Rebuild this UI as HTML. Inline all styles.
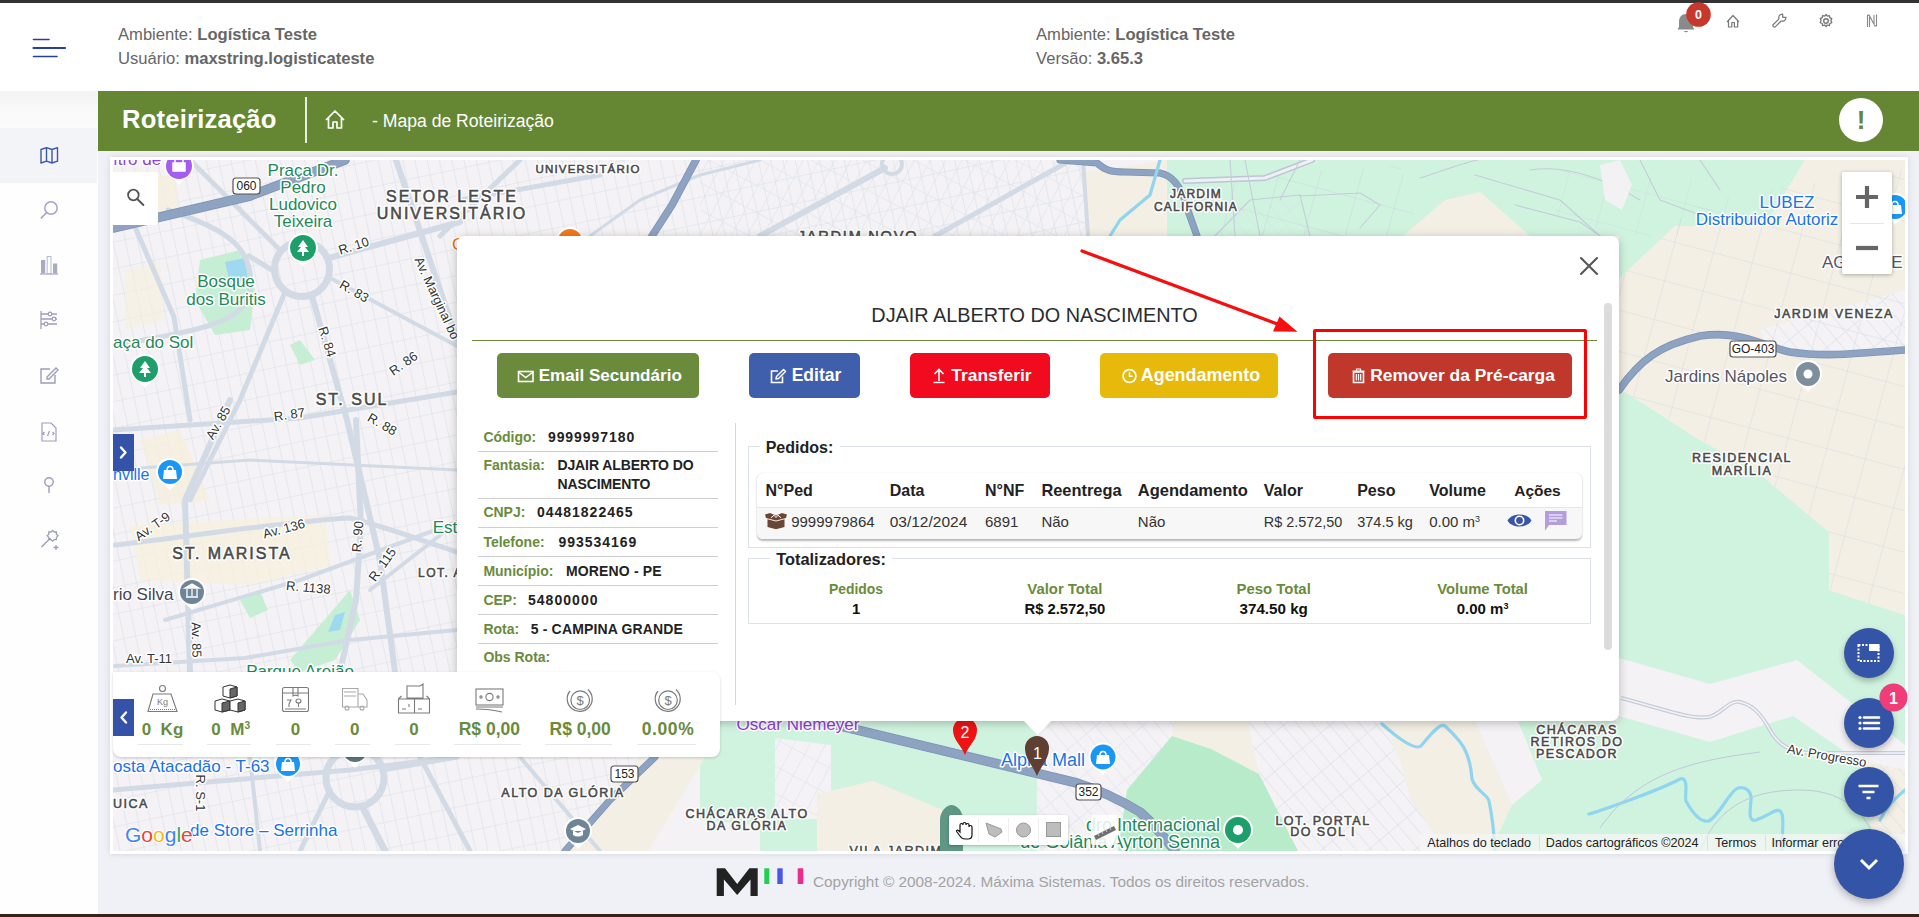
<!DOCTYPE html>
<html><head><meta charset="utf-8">
<style>
*{box-sizing:border-box;margin:0;padding:0}
html,body{width:1919px;height:917px;overflow:hidden;background:#f0f1f6;font-family:"Liberation Sans",sans-serif;position:relative}
.abs{position:absolute}
.t{position:absolute;line-height:1;white-space:nowrap}
sup{font-size:.6em;vertical-align:0;position:relative;top:-.55em}
#topbar{left:0;top:0;width:1919px;height:3px;background:#333}
#header{left:0;top:3px;width:1919px;height:88px;background:#fff}
.htxt{position:absolute;font-size:16.6px;color:#666;line-height:24px;white-space:nowrap}
.htxt b{color:#666}
#sidebar{left:0;top:91px;width:98px;height:823px;background:#fefefe}
#green{left:98px;top:91px;width:1821px;height:60px;background:#658734}
#mapcard{left:110px;top:157px;width:1798px;height:697px;background:#fff;box-shadow:0 0 6px rgba(0,0,0,.12)}
#map{left:113px;top:160px;width:1792px;height:691px;overflow:hidden;background:#f2f1f4}
#footer{left:98px;top:854px;width:1821px;height:60px}
#botbar{left:0;top:914px;width:1919px;height:3px;background:#3b2015}
#modal{left:457px;top:236px;width:1162px;height:485px;background:#fff;border-radius:8px;box-shadow:0 2px 10px rgba(0,0,0,.25)}
.btn{position:absolute;top:353px;height:45px;border-radius:5px;color:#fff;font-weight:700;font-size:17.2px;line-height:45px;white-space:nowrap}
</style></head>
<body>
<div id="topbar" class="abs"></div>
<div id="header" class="abs">
  <div class="htxt" style="left:118px;top:20px">Ambiente: <b>Logística Teste</b></div>
  <div class="htxt" style="left:118px;top:44px">Usuário: <b>maxstring.logisticateste</b></div>
  <div class="htxt" style="left:1036px;top:20px">Ambiente: <b>Logística Teste</b></div>
  <div class="htxt" style="left:1036px;top:44px">Versão: <b>3.65.3</b></div>
  <svg class="abs" style="left:30px;top:32px" width="40" height="26" viewBox="0 0 40 26">
    <line x1="3.5" y1="4.5" x2="19" y2="4.5" stroke="#2440a0" stroke-width="1.6" stroke-linecap="round"/>
    <line x1="3.5" y1="13" x2="35" y2="13" stroke="#2440a0" stroke-width="2.2" stroke-linecap="round"/>
    <line x1="3.5" y1="21.5" x2="27" y2="21.5" stroke="#2440a0" stroke-width="1.6" stroke-linecap="round"/>
  </svg>
  <svg class="abs" style="left:1670px;top:-3px" width="220" height="40" viewBox="1670 0 220 40">
    <path d="M1686 14 c-4.5 0 -7 3.5 -7 8 v5 l-1.5 2.5 h17 l-1.5 -2.5 v-5 c0 -4.5 -2.5 -8 -7 -8z" fill="#8a8a8a"/>
    <path d="M1684 31 h4 a2 1.3 0 0 1 -4 0z" fill="#8a8a8a"/>
    <circle cx="1698.5" cy="14.5" r="12.3" fill="#c8372b"/>
    <text x="1698.5" y="19" text-anchor="middle" font-family="Liberation Sans" font-weight="700" font-size="12.5" fill="#fff">0</text>
    <path d="M1727 22 l6 -6.5 l6 6.5 M1728.5 20.5 v6.5 h3.3 v-4.5 h2.6 v4.5 h3.3 v-6.5" fill="none" stroke="#777" stroke-width="1.2" stroke-linejoin="round"/>
    <g transform="translate(1779.3 20.7) rotate(-45) translate(-8.5 0)" fill="none" stroke="#777" stroke-width="1.2" stroke-linejoin="round">
      <path d="M9.6 -1.5 H1.6 A1.5 1.5 0 0 0 1.6 1.5 H9.6 A3.6 3.6 0 0 0 15.6 2.3 L13.3 0 L15.6 -2.3 A3.6 3.6 0 0 0 9.6 -1.5z"/>
    </g>
    <circle cx="1826" cy="21" r="2.3" fill="none" stroke="#777" stroke-width="1.4"/>
    <path d="M1826 14.5 l1.3 1.7 l2.1 -0.6 l0.4 2.1 l2 0.9 l-0.9 2 l0.9 2 l-2 0.9 l-0.4 2.1 l-2.1 -0.6 l-1.3 1.7 l-1.3 -1.7 l-2.1 0.6 l-0.4 -2.1 l-2 -0.9 l0.9 -2 l-0.9 -2 l2 -0.9 l0.4 -2.1 l2.1 0.6z" fill="none" stroke="#777" stroke-width="1.3" stroke-linejoin="round"/>
    <path d="M1867.5 27 v-11.5 l1.5 -0.5 l6 11 l1.5 -0.5 v-11 M1869.5 27 v-10 M1874 15 v10" fill="none" stroke="#888" stroke-width="1.1"/>
  </svg>
</div>
<div id="sidebar" class="abs">
  <div class="abs" style="left:0;top:0;width:98px;height:37px;background:linear-gradient(#f3f3f5,#f9f9fa 50%,#fbfbfc)"></div>
  <div class="abs" style="left:0;top:37px;width:97px;height:55px;background:#f3f4f8"></div>
  <svg class="abs" style="left:0;top:0" width="98" height="480" viewBox="0 91 98 480">
    <g fill="none" stroke="#3b57a8" stroke-width="1.4" stroke-linejoin="round">
      <path d="M41 149.5 l5.5 -1.8 l5.5 1.8 l5.5 -1.8 v13.5 l-5.5 1.8 l-5.5 -1.8 l-5.5 1.8z M46.5 147.7 v13.5 M52 149.5 v13.5"/>
    </g>
    <g fill="none" stroke="#9d9cbc" stroke-width="1.5">
      <circle cx="51" cy="208" r="6.2" stroke="#a3a6c8"/><path d="M46.6 212.6 L40.8 218.4" stroke="#a3a6c8"/>
      <path d="M40 274 h18" stroke="#a9aac3" stroke-width="1.3"/>
      <rect x="41" y="260" width="4.2" height="13.5" fill="#a9aac3" stroke="none"/>
      <rect x="47.2" y="256.5" width="3.8" height="17" fill="none" stroke="#b5b8d4" stroke-width="1"/>
      <rect x="53" y="263.5" width="4.2" height="10" fill="#a9aac3" stroke="none"/>
      <path d="M41 311 v18 M41 314 h16 M41 319 h16 M41 324 h16" stroke-width="1.3"/>
      <circle cx="50" cy="314" r="1.8" fill="#fafafc" stroke-width="1.2"/><circle cx="54" cy="319" r="1.8" fill="#fafafc" stroke-width="1.2"/><circle cx="46" cy="324" r="1.8" fill="#fafafc" stroke-width="1.2"/>
      <path d="M50 369 h-9 v14 h14 v-8 M47 377 l9 -9 l2 2 l-9 9 h-2z" stroke-width="1.4"/>
      <path d="M42 423 h9 l5 5 v13 h-14z M44.5 432 l-1.5 1.5 l1.5 1.5 M52.5 432 l1.5 1.5 l-1.5 1.5 M49.5 431 l-2 5" stroke-width="1.2"/>
      <circle cx="49" cy="482" r="4.2" stroke-width="1.4"/><path d="M49 486 v7" stroke-width="1.4"/>
      <path d="M41.5 547 l9 -9 M51 532 l1.6 -1.6 l1.6 1.6 h2.2 v2.2 l1.6 1.6 l-1.6 1.6 v2.2 h-2.2 l-1.6 1.6 l-1.6 -1.6 h-2.2 v-2.2 l-1.6 -1.6 l1.6 -1.6 v-2.2z M56 545 v5 M53.5 547.5 h5" stroke-width="1.3"/>
    </g>
  </svg>
</div>
<div id="green" class="abs">
  <div class="abs" style="left:24px;top:13px;font-size:25.6px;letter-spacing:0.2px;font-weight:700;color:#fff;white-space:nowrap;line-height:30px">Roteirização</div>
  <div class="abs" style="left:207px;top:6px;width:1.5px;height:46px;background:#e8eee0"></div>
  <svg class="abs" style="left:226px;top:18px" width="22" height="22" viewBox="0 0 22 22">
    <path d="M2 11 l9 -9 l9 9 M4.5 9 v10 h4.5 v-6 h4 v6 h4.5 v-10" fill="none" stroke="#fff" stroke-width="1.7" stroke-linejoin="round"/>
  </svg>
  <div class="abs" style="left:274px;top:20px;font-size:17.6px;color:#fff;white-space:nowrap;line-height:20px">- Mapa de Roteirização</div>
  <div class="abs" style="left:1741px;top:7px;width:44px;height:44px;border-radius:22px;background:#fff;color:#658734;font-weight:700;font-size:26px;text-align:center;line-height:44px">!</div>
</div>
<div id="mapcard" class="abs"></div>
<div id="map" class="abs">
<svg width="1792" height="691" viewBox="113 160 1792 691" style="position:absolute;left:0;top:0">
<defs>
  <pattern id="g1" width="12" height="26" patternUnits="userSpaceOnUse" patternTransform="rotate(-12)">
    <path d="M0 0 H12 M0 0 V26" stroke="#d8dfe8" stroke-width="1.2" fill="none"/>
  </pattern>
  <pattern id="g2" width="14" height="24" patternUnits="userSpaceOnUse" patternTransform="rotate(28)">
    <path d="M0 0 H14 M0 0 V24" stroke="#dae1ea" stroke-width="1" fill="none"/>
  </pattern>
  <pattern id="g3" width="12" height="30" patternUnits="userSpaceOnUse" patternTransform="rotate(-40)">
    <path d="M0 0 H12 M0 0 V30" stroke="#d3dbe6" stroke-width="1" fill="none"/>
  </pattern>
  <pattern id="g4" width="40" height="40" patternUnits="userSpaceOnUse" patternTransform="rotate(15)">
    <path d="M0 0 H40 M0 0 V40" stroke="#c9d3e0" stroke-width="0.9" fill="none"/>
  </pattern>
</defs>
<rect x="113" y="160" width="1792" height="691" fill="#f4f2f5"/>
<polygon points="113,160 1086,160 1086,236 457,236 457,672 113,672" fill="url(#g1)" />
<polygon points="113,757 700,757 640,851 113,851" fill="url(#g1)" />
<polygon points="700,160 1086,160 1086,236 700,236" fill="url(#g2)" />
<polygon points="1167,160 1805,160 1765,226 1675,226 1619,279 1619,160" fill="#d0f3df" />
<polygon points="1619,388 1700,440 1755,470 1829,532 1829,590 1905,615 1905,851 1619,851" fill="#d0f3df" />
<polygon points="1167,160 1619,160 1619,236 1167,236" fill="#d0f3df" />
<polygon points="1805,160 1905,160 1905,615 1829,590 1829,532 1755,470 1700,440 1619,388 1619,279 1675,226 1765,226" fill="#f3efe4" />
<polygon points="1760,330 1905,290 1905,350 1770,352" fill="#f4f2f5" />
<polygon points="1760,330 1905,290 1905,350 1770,352" fill="url(#g3)" />
<polygon points="1700,200 1905,170 1905,615 1829,590 1829,532 1755,470 1700,440 1619,388 1619,279" fill="url(#g4)" opacity=".8"/>
<polygon points="1086,172 1167,160 1167,236 1086,236" fill="#f3efe4" />
<polygon points="1403,236 1445,200 1480,192 1530,236" fill="#f3efe4" />
<polygon points="1200,180 1400,165 1420,236 1190,236" fill="url(#g4)" />
<polygon points="1550,170 1700,180 1720,236 1560,236" fill="url(#g4)" opacity=".7"/>
<polygon points="1619,658 1710,684 1797,660 1905,745 1905,770 1860,762 1793,716 1710,742 1619,716" fill="#f4f2f5" />
<polygon points="1860,760 1905,770 1905,851 1875,851" fill="#f3efe4" />
<polygon points="1860,760 1905,770 1905,851 1875,851" fill="url(#g3)" />
<polygon points="700,721 1037,721 1037,851 700,851" fill="#d0f3df" />
<polygon points="640,757 705,757 648,851 560,851" fill="#f3efe4" />
<polygon points="775,738 831,745 831,819 775,819" fill="#f4f2f5" />
<polygon points="775,738 831,745 831,819 775,819" fill="url(#g2)" />
<polygon points="817,794 873,781 950,813 950,851 817,851" fill="#f3efe4" />
<polygon points="700,820 760,825 760,851 700,851" fill="#f4f2f5" />
<polygon points="1037,721 1174,721 1174,800 1127,790 1118,851 1037,851" fill="#f4f2f5" />
<polygon points="1037,721 1174,721 1174,800 1127,790 1118,851 1037,851" fill="url(#g3)" opacity=".8"/>
<polygon points="1174,721 1259,721 1259,774 1211,749 1172,736" fill="#f3efe4" />
<polygon points="1172,736 1211,749 1259,774 1307,851 1118,851 1127,790" fill="#b7ebca" />
<polygon points="1248,721 1385,721 1400,760 1411,800 1447,851 1298,851 1259,774" fill="#f4f2f5" />
<polygon points="1248,721 1385,721 1400,760 1411,800 1447,851 1298,851 1259,774" fill="url(#g3)" />
<polygon points="1385,721 1475,721 1512,805 1490,851 1447,851 1411,800 1400,760" fill="#f3efe4" />
<polygon points="1475,721 1619,721 1619,851 1490,851 1512,805" fill="#d0f3df" />
<polygon points="1475,721 1518,721 1542,780 1512,805" fill="#f4f2f5" />
<polygon points="200,260 240,250 255,290 250,330 215,335 195,300" fill="#c6eed4" />
<polygon points="225,262 245,258 248,280 230,283" fill="#9fd9f0" />
<polygon points="118,180 175,175 180,215 130,230" fill="#f7f0dc" opacity=".7"/>
<polygon points="125,270 160,262 165,320 125,330" fill="#f7f0dc" opacity=".6"/>
<polygon points="130,525 325,515 330,565 250,585 140,580" fill="#f7f0dc" opacity=".75"/>
<polygon points="140,440 180,430 210,500 160,505" fill="#f7f0dc" opacity=".7"/>
<polygon points="350,590 360,620 335,660 300,672 290,660" fill="#c6eed4" />
<polygon points="335,615 345,612 340,630 328,632" fill="#9fd9f0" />
<polygon points="290,345 300,340 315,360 300,365" fill="#c6eed4" />
<polygon points="240,600 260,592 268,610 250,618" fill="#c6eed4" />
<g fill="none" stroke-linecap="round" stroke-linejoin="round">
<path d="M190 160 L280 250" stroke="#d2dbe5" stroke-width="5"/>
<path d="M329 258 L460 222" stroke="#d2dbe5" stroke-width="6"/>
<path d="M332 279 L457 346" stroke="#d2dbe5" stroke-width="4"/>
<path d="M312 296 L347 420 L380 560 L395 672" stroke="#d2dbe5" stroke-width="6"/>
<path d="M285 292 L240 400 L190 500" stroke="#d2dbe5" stroke-width="5"/>
<path d="M272 270 L249 256" stroke="#d2dbe5" stroke-width="5"/>
<path d="M168 210 C230 230 255 250 250 290 C245 320 210 330 113 345" stroke="#d2dbe5" stroke-width="5"/>
<path d="M396 160 L457 340" stroke="#d2dbe5" stroke-width="6"/>
<path d="M135 227 L174 317 L190 420" stroke="#d2dbe5" stroke-width="5"/>
<path d="M230 400 L185 500 L190 672" stroke="#d2dbe5" stroke-width="6"/>
<path d="M113 430 L300 418 L457 392" stroke="#d2dbe5" stroke-width="5"/>
<path d="M115 545 C200 535 300 520 350 518 C380 525 420 540 457 552" stroke="#d2dbe5" stroke-width="5"/>
<path d="M356 420 L361 525 L356 600 L340 672" stroke="#d2dbe5" stroke-width="6"/>
<path d="M457 522 L370 590" stroke="#d2dbe5" stroke-width="4"/>
<path d="M165 620 L300 580 L457 522" stroke="#d2dbe5" stroke-width="4"/>
<path d="M115 666 L245 658 L350 640 L457 630" stroke="#d2dbe5" stroke-width="4"/>
<path d="M113 470 L250 460 L457 470" stroke="#d2dbe5" stroke-width="3"/>
<path d="M520 160 L440 236" stroke="#d2dbe5" stroke-width="5"/>
<path d="M760 236 L885 168" stroke="#d2dbe5" stroke-width="6"/>
<path d="M935 236 L1071 160" stroke="#d2dbe5" stroke-width="5"/>
<circle cx="892" cy="164" r="10" stroke="#d2dbe5" stroke-width="4"/>
<path d="M590 236 L640 200 L700 175 L760 160" stroke="#d2dbe5" stroke-width="3"/>
<path d="M460 200 L600 175" stroke="#d2dbe5" stroke-width="5"/>
<path d="M1083 160 L1088 236" stroke="#d2dbe5" stroke-width="4"/>
<path d="M113 790 L350 770 L457 757" stroke="#d2dbe5" stroke-width="5"/>
<path d="M420 757 L470 851" stroke="#d2dbe5" stroke-width="5"/>
<path d="M250 757 L260 851" stroke="#d2dbe5" stroke-width="4"/>
<path d="M520 757 L600 851" stroke="#d2dbe5" stroke-width="4"/>
<path d="M1185 181 L1265 178 L1312 160" stroke="#bcc5d3" stroke-width="6"/>
<path d="M1185 181 L1265 178 L1312 160" stroke="#eef0f3" stroke-width="3"/>
<path d="M1215 236 L1250 200 L1300 195 L1310 236" stroke="#c5ccda" stroke-width="1.1"/>
<path d="M1300 196 L1360 193 L1380 205 L1360 228" stroke="#c5ccda" stroke-width="1.1"/>
<path d="M1420 178 C1440 172 1465 162 1478 160" stroke="#c5ccda" stroke-width="1.1"/>
<path d="M1475 175 L1560 200 L1600 236" stroke="#c5ccda" stroke-width="1.1"/>
<path d="M1515 205 L1580 222 L1600 236" stroke="#c5ccda" stroke-width="1.1"/>
<path d="M1230 160 L1235 236" stroke="#c5ccda" stroke-width="1.1"/>
<path d="M1245 160 L1260 236" stroke="#c5ccda" stroke-width="1.1"/>
<path d="M1280 200 L1300 160" stroke="#c5ccda" stroke-width="1.1"/>
<path d="M1640 160 L1660 200 L1700 215" stroke="#c5ccda" stroke-width="1.1"/>
<path d="M1700 160 L1720 190" stroke="#c5ccda" stroke-width="1.1"/>
<path d="M1530 170 C1560 165 1600 175 1640 200" stroke="#c5ccda" stroke-width="1.1"/>
<polygon points="1225,236 1230,210 1300,200 1310,236" fill="url(#g3)" opacity=".7"/>
<polygon points="1600,165 1620,160 1632,185 1622,210 1605,200" fill="#f2f1f4" />
<circle cx="302" cy="269" r="27.5" stroke="#d2dbe5" stroke-width="7"/>
<circle cx="355" cy="778" r="29" stroke="#d2dbe5" stroke-width="7"/>
<path d="M362 806 L385 851" stroke="#d2dbe5" stroke-width="7"/>
<path d="M330 790 L300 851" stroke="#d2dbe5" stroke-width="5"/>
<path d="M383 770 L457 757" stroke="#d2dbe5" stroke-width="5"/>
<path d="M113 228 L250 196 L345 160" stroke="#7d93b5" stroke-width="9.6"/>
<path d="M113 228 L250 196 L345 160" stroke="#8ea3c1" stroke-width="8"/>
<path d="M696 160 L672 205 L652 236" stroke="#7d93b5" stroke-width="7.6"/>
<path d="M696 160 L672 205 L652 236" stroke="#8ea3c1" stroke-width="6"/>
<path d="M1060 160 L1097 163 C1105 170 1110 172 1125 172 L1160 173 C1175 176 1182 190 1186 205 L1197 236" stroke="#7d93b5" stroke-width="7.1"/>
<path d="M1060 160 L1097 163 C1105 170 1110 172 1125 172 L1160 173 C1175 176 1182 190 1186 205 L1197 236" stroke="#8ea3c1" stroke-width="5.5"/>
<path d="M1619 390 C1640 360 1660 345 1700 336 C1740 330 1760 345 1790 352 C1830 358 1870 352 1905 350" stroke="#7d93b5" stroke-width="7.6"/>
<path d="M1619 390 C1640 360 1660 345 1700 336 C1740 330 1760 345 1790 352 C1830 358 1870 352 1905 350" stroke="#8ea3c1" stroke-width="6"/>
<path d="M820 721 L1077 783 C1100 790 1120 800 1140 812 C1155 825 1165 838 1175 851" stroke="#7d93b5" stroke-width="9.6"/>
<path d="M820 721 L1077 783 C1100 790 1120 800 1140 812 C1155 825 1165 838 1175 851" stroke="#8ea3c1" stroke-width="8"/>
<path d="M655 757 L610 800 L565 851" stroke="#7d93b5" stroke-width="7.1"/>
<path d="M655 757 L610 800 L565 851" stroke="#8ea3c1" stroke-width="5.5"/>
</g>
<g fill="none" stroke="#8fd5ef" stroke-width="3.2" stroke-linejoin="round" stroke-linecap="round">
<path d="M1160 160 L1150 195 L1120 220 L1110 236"/>
<path d="M1382 724 C1400 740 1415 750 1421 746 C1430 735 1440 722 1445 726 C1460 740 1470 750 1472 779 C1475 790 1488 795 1489 801 C1492 815 1494 830 1495 851"/>
<path d="M1589 814 C1600 811 1660 790 1680 779 C1690 776 1684 798 1686 801 C1692 812 1700 823 1709 821 C1720 815 1730 790 1738 788 C1746 786 1752 792 1751 800 C1750 812 1748 822 1756 820 C1770 815 1776 808 1780 811 C1785 815 1782 830 1782 851"/>
<path d="M1880 820 C1890 800 1900 795 1905 790"/>
</g>
<path d="M1621 698 C1660 708 1690 720 1709 717 C1722 714 1728 700 1740 702 C1752 705 1760 712 1770 730 C1778 745 1790 752 1810 753 L1905 753" fill="none" stroke="#c5cdd9" stroke-width="4"/>
<path d="M1621 698 C1660 708 1690 720 1709 717 C1722 714 1728 700 1740 702 C1752 705 1760 712 1770 730 C1778 745 1790 752 1810 753 L1905 753" fill="none" stroke="#f4f2f5" stroke-width="1.5"/>
<path d="M1600 828 C1640 770 1700 760 1760 752 M1700 851 C1720 800 1760 790 1800 790 C1850 790 1870 820 1880 851" fill="none" stroke="#c0c8d8" stroke-width="1"/>
<!--LABELS-->
<g font-family="Liberation Sans">
<text x="303" y="175.5" text-anchor="middle" font-size="17" font-weight="400" fill="#1e8a5a" letter-spacing="0" style="paint-order:stroke;stroke:#fff;stroke-width:3px;stroke-linejoin:round;">Praça Dr.</text>
<text x="303" y="192.5" text-anchor="middle" font-size="17" font-weight="400" fill="#1e8a5a" letter-spacing="0" style="paint-order:stroke;stroke:#fff;stroke-width:3px;stroke-linejoin:round;">Pedro</text>
<text x="303" y="209.5" text-anchor="middle" font-size="17" font-weight="400" fill="#1e8a5a" letter-spacing="0" style="paint-order:stroke;stroke:#fff;stroke-width:3px;stroke-linejoin:round;">Ludovico</text>
<text x="303" y="226.9" text-anchor="middle" font-size="17" font-weight="400" fill="#1e8a5a" letter-spacing="0" style="paint-order:stroke;stroke:#fff;stroke-width:3px;stroke-linejoin:round;">Teixeira</text>
<text x="226" y="287.4" text-anchor="middle" font-size="17" font-weight="400" fill="#1e8a5a" letter-spacing="0" style="paint-order:stroke;stroke:#fff;stroke-width:3px;stroke-linejoin:round;">Bosque</text>
<text x="226" y="304.8" text-anchor="middle" font-size="17" font-weight="400" fill="#1e8a5a" letter-spacing="0" style="paint-order:stroke;stroke:#fff;stroke-width:3px;stroke-linejoin:round;">dos Buritis</text>
<text x="113" y="348" text-anchor="start" font-size="17" font-weight="400" fill="#1e8a5a" letter-spacing="0" style="paint-order:stroke;stroke:#fff;stroke-width:3px;stroke-linejoin:round;">aça do Sol</text>
<text x="113" y="165" text-anchor="start" font-size="17" font-weight="400" fill="#8e44d8" letter-spacing="0" style="paint-order:stroke;stroke:#fff;stroke-width:3px;stroke-linejoin:round;">ıtro de</text>
<text x="452" y="201.7" text-anchor="middle" font-size="16" fill="#fff" letter-spacing="2" style="stroke:#fff;stroke-width:3.4px;stroke-linejoin:round">SETOR LESTE</text>
<text x="452" y="201.7" text-anchor="middle" font-size="16" fill="#4a4a4a" letter-spacing="2" style="stroke:#4a4a4a;stroke-width:0.55px">SETOR LESTE</text>
<text x="452" y="219.4" text-anchor="middle" font-size="16" fill="#fff" letter-spacing="2" style="stroke:#fff;stroke-width:3.4px;stroke-linejoin:round">UNIVERSITÁRIO</text>
<text x="452" y="219.4" text-anchor="middle" font-size="16" fill="#4a4a4a" letter-spacing="2" style="stroke:#4a4a4a;stroke-width:0.55px">UNIVERSITÁRIO</text>
<text x="588" y="173" text-anchor="middle" font-size="11.5" fill="#fff" letter-spacing="1.2" style="stroke:#fff;stroke-width:3.4px;stroke-linejoin:round">UNIVERSITÁRIO</text>
<text x="588" y="173" text-anchor="middle" font-size="11.5" fill="#4a4a4a" letter-spacing="1.2" style="stroke:#4a4a4a;stroke-width:0.55px">UNIVERSITÁRIO</text>
<text x="858" y="241" text-anchor="middle" font-size="14.5" fill="#fff" letter-spacing="1.8" style="stroke:#fff;stroke-width:3.4px;stroke-linejoin:round">JARDIM NOVO</text>
<text x="858" y="241" text-anchor="middle" font-size="14.5" fill="#4a4a4a" letter-spacing="1.8" style="stroke:#4a4a4a;stroke-width:0.55px">JARDIM NOVO</text>
<text x="355" y="250" text-anchor="middle" font-size="13" font-weight="400" fill="#333" letter-spacing="0" style="paint-order:stroke;stroke:#fff;stroke-width:3px;stroke-linejoin:round;" transform="rotate(-18 355 250)">R. 10</text>
<text x="352" y="295" text-anchor="middle" font-size="13" font-weight="400" fill="#333" letter-spacing="0" style="paint-order:stroke;stroke:#fff;stroke-width:3px;stroke-linejoin:round;" transform="rotate(30 352 295)">R. 83</text>
<text x="323" y="343" text-anchor="middle" font-size="13" font-weight="400" fill="#333" letter-spacing="0" style="paint-order:stroke;stroke:#fff;stroke-width:3px;stroke-linejoin:round;" transform="rotate(72 323 343)">R. 84</text>
<text x="433" y="300" text-anchor="middle" font-size="13" font-weight="400" fill="#333" letter-spacing="0" style="paint-order:stroke;stroke:#fff;stroke-width:3px;stroke-linejoin:round;" transform="rotate(65 433 300)">Av. Marginal bo</text>
<text x="406" y="367" text-anchor="middle" font-size="13" font-weight="400" fill="#333" letter-spacing="0" style="paint-order:stroke;stroke:#fff;stroke-width:3px;stroke-linejoin:round;" transform="rotate(-35 406 367)">R. 86</text>
<text x="352" y="405" text-anchor="middle" font-size="16" fill="#fff" letter-spacing="2" style="stroke:#fff;stroke-width:3.4px;stroke-linejoin:round">ST. SUL</text>
<text x="352" y="405" text-anchor="middle" font-size="16" fill="#4a4a4a" letter-spacing="2" style="stroke:#4a4a4a;stroke-width:0.55px">ST. SUL</text>
<text x="290" y="419" text-anchor="middle" font-size="13" font-weight="400" fill="#333" letter-spacing="0" style="paint-order:stroke;stroke:#fff;stroke-width:3px;stroke-linejoin:round;" transform="rotate(-8 290 419)">R. 87</text>
<text x="380" y="428" text-anchor="middle" font-size="13" font-weight="400" fill="#333" letter-spacing="0" style="paint-order:stroke;stroke:#fff;stroke-width:3px;stroke-linejoin:round;" transform="rotate(30 380 428)">R. 88</text>
<text x="222" y="425" text-anchor="middle" font-size="13" font-weight="400" fill="#333" letter-spacing="0" style="paint-order:stroke;stroke:#fff;stroke-width:3px;stroke-linejoin:round;" transform="rotate(-60 222 425)">Av. 85</text>
<text x="113" y="480" text-anchor="start" font-size="16" font-weight="400" fill="#1a73e8" letter-spacing="0" style="paint-order:stroke;stroke:#fff;stroke-width:3px;stroke-linejoin:round;">nville</text>
<text x="155" y="530" text-anchor="middle" font-size="13" font-weight="400" fill="#333" letter-spacing="0" style="paint-order:stroke;stroke:#fff;stroke-width:3px;stroke-linejoin:round;" transform="rotate(-35 155 530)">Av. T-9</text>
<text x="285" y="533" text-anchor="middle" font-size="13" font-weight="400" fill="#333" letter-spacing="0" style="paint-order:stroke;stroke:#fff;stroke-width:3px;stroke-linejoin:round;" transform="rotate(-15 285 533)">Av. 136</text>
<text x="362" y="537" text-anchor="middle" font-size="13" font-weight="400" fill="#333" letter-spacing="0" style="paint-order:stroke;stroke:#fff;stroke-width:3px;stroke-linejoin:round;" transform="rotate(-85 362 537)">R. 90</text>
<text x="445" y="533" text-anchor="middle" font-size="17" font-weight="400" fill="#1e8a5a" letter-spacing="0" style="paint-order:stroke;stroke:#fff;stroke-width:3px;stroke-linejoin:round;">Est</text>
<text x="232" y="559" text-anchor="middle" font-size="16" fill="#fff" letter-spacing="2" style="stroke:#fff;stroke-width:3.4px;stroke-linejoin:round">ST. MARISTA</text>
<text x="232" y="559" text-anchor="middle" font-size="16" fill="#4a4a4a" letter-spacing="2" style="stroke:#4a4a4a;stroke-width:0.55px">ST. MARISTA</text>
<text x="308" y="592" text-anchor="middle" font-size="13" font-weight="400" fill="#333" letter-spacing="0" style="paint-order:stroke;stroke:#fff;stroke-width:3px;stroke-linejoin:round;" transform="rotate(5 308 592)">R. 1138</text>
<text x="386" y="567" text-anchor="middle" font-size="13" font-weight="400" fill="#333" letter-spacing="0" style="paint-order:stroke;stroke:#fff;stroke-width:3px;stroke-linejoin:round;" transform="rotate(-55 386 567)">R. 115</text>
<text x="418" y="577" text-anchor="start" font-size="12" fill="#fff" letter-spacing="1.5" style="stroke:#fff;stroke-width:3.4px;stroke-linejoin:round">LOT. A</text>
<text x="418" y="577" text-anchor="start" font-size="12" fill="#4a4a4a" letter-spacing="1.5" style="stroke:#4a4a4a;stroke-width:0.55px">LOT. A</text>
<text x="113" y="600" text-anchor="start" font-size="17" font-weight="400" fill="#445" letter-spacing="0" style="paint-order:stroke;stroke:#fff;stroke-width:3px;stroke-linejoin:round;">rio Silva</text>
<text x="192" y="640" text-anchor="middle" font-size="13" font-weight="400" fill="#333" letter-spacing="0" style="paint-order:stroke;stroke:#fff;stroke-width:3px;stroke-linejoin:round;" transform="rotate(88 192 640)">Av. 85</text>
<text x="149" y="663" text-anchor="middle" font-size="13" font-weight="400" fill="#333" letter-spacing="0" style="paint-order:stroke;stroke:#fff;stroke-width:3px;stroke-linejoin:round;">Av. T-11</text>
<text x="300" y="677" text-anchor="middle" font-size="17" font-weight="400" fill="#1e8a5a" letter-spacing="0" style="paint-order:stroke;stroke:#fff;stroke-width:3px;stroke-linejoin:round;">Parque Areião</text>
<text x="113" y="772" text-anchor="start" font-size="17" font-weight="400" fill="#1a73e8" letter-spacing="0" style="paint-order:stroke;stroke:#fff;stroke-width:3px;stroke-linejoin:round;">osta Atacadão - T-63</text>
<text x="113" y="808" text-anchor="start" font-size="12.5" fill="#fff" letter-spacing="1.5" style="stroke:#fff;stroke-width:3.4px;stroke-linejoin:round">UICA</text>
<text x="113" y="808" text-anchor="start" font-size="12.5" fill="#4a4a4a" letter-spacing="1.5" style="stroke:#4a4a4a;stroke-width:0.55px">UICA</text>
<text x="196" y="793" text-anchor="middle" font-size="13" font-weight="400" fill="#333" letter-spacing="0" style="paint-order:stroke;stroke:#fff;stroke-width:3px;stroke-linejoin:round;" transform="rotate(90 196 793)">R. S-1</text>
<text x="190" y="836" text-anchor="start" font-size="17" font-weight="400" fill="#1a73e8" letter-spacing="0" style="paint-order:stroke;stroke:#fff;stroke-width:3px;stroke-linejoin:round;">de Store – Serrinha</text>
<text x="563" y="797" text-anchor="middle" font-size="12.5" fill="#fff" letter-spacing="1.5" style="stroke:#fff;stroke-width:3.4px;stroke-linejoin:round">ALTO DA GLÓRIA</text>
<text x="563" y="797" text-anchor="middle" font-size="12.5" fill="#4a4a4a" letter-spacing="1.5" style="stroke:#4a4a4a;stroke-width:0.55px">ALTO DA GLÓRIA</text>
<text x="747" y="818" text-anchor="middle" font-size="12.5" fill="#fff" letter-spacing="1.5" style="stroke:#fff;stroke-width:3.4px;stroke-linejoin:round">CHÁCARAS ALTO</text>
<text x="747" y="818" text-anchor="middle" font-size="12.5" fill="#4a4a4a" letter-spacing="1.5" style="stroke:#4a4a4a;stroke-width:0.55px">CHÁCARAS ALTO</text>
<text x="747" y="830" text-anchor="middle" font-size="12.5" fill="#fff" letter-spacing="1.5" style="stroke:#fff;stroke-width:3.4px;stroke-linejoin:round">DA GLÓRIA</text>
<text x="747" y="830" text-anchor="middle" font-size="12.5" fill="#4a4a4a" letter-spacing="1.5" style="stroke:#4a4a4a;stroke-width:0.55px">DA GLÓRIA</text>
<text x="798" y="730" text-anchor="middle" font-size="17" font-weight="400" fill="#8e44d8" letter-spacing="0" style="paint-order:stroke;stroke:#fff;stroke-width:3px;stroke-linejoin:round;">Óscar Niemeyer</text>
<text x="896" y="855" text-anchor="middle" font-size="12.5" fill="#fff" letter-spacing="1.5" style="stroke:#fff;stroke-width:3.4px;stroke-linejoin:round">VILA JARDIM</text>
<text x="896" y="855" text-anchor="middle" font-size="12.5" fill="#4a4a4a" letter-spacing="1.5" style="stroke:#4a4a4a;stroke-width:0.55px">VILA JARDIM</text>
<text x="1043" y="766" text-anchor="middle" font-size="18" font-weight="400" fill="#1a73e8" letter-spacing="0" style="paint-order:stroke;stroke:#fff;stroke-width:3px;stroke-linejoin:round;">Alpha Mall</text>
<text x="1220" y="831" text-anchor="end" font-size="18" font-weight="400" fill="#1e8a5a" letter-spacing="0" style="paint-order:stroke;stroke:#fff;stroke-width:3px;stroke-linejoin:round;">dro Internacional</text>
<text x="1220" y="848" text-anchor="end" font-size="18" font-weight="400" fill="#1e8a5a" letter-spacing="0" style="paint-order:stroke;stroke:#fff;stroke-width:3px;stroke-linejoin:round;">de Goiânia Ayrton Senna</text>
<text x="1323" y="825" text-anchor="middle" font-size="12.5" fill="#fff" letter-spacing="1.5" style="stroke:#fff;stroke-width:3.4px;stroke-linejoin:round">LOT. PORTAL</text>
<text x="1323" y="825" text-anchor="middle" font-size="12.5" fill="#4a4a4a" letter-spacing="1.5" style="stroke:#4a4a4a;stroke-width:0.55px">LOT. PORTAL</text>
<text x="1323" y="836" text-anchor="middle" font-size="12.5" fill="#fff" letter-spacing="1.5" style="stroke:#fff;stroke-width:3.4px;stroke-linejoin:round">DO SOL I</text>
<text x="1323" y="836" text-anchor="middle" font-size="12.5" fill="#4a4a4a" letter-spacing="1.5" style="stroke:#4a4a4a;stroke-width:0.55px">DO SOL I</text>
<text x="1577" y="734" text-anchor="middle" font-size="12.5" fill="#fff" letter-spacing="1.5" style="stroke:#fff;stroke-width:3.4px;stroke-linejoin:round">CHÁCARAS</text>
<text x="1577" y="734" text-anchor="middle" font-size="12.5" fill="#4a4a4a" letter-spacing="1.5" style="stroke:#4a4a4a;stroke-width:0.55px">CHÁCARAS</text>
<text x="1577" y="746" text-anchor="middle" font-size="12.5" fill="#fff" letter-spacing="1.5" style="stroke:#fff;stroke-width:3.4px;stroke-linejoin:round">RETIROS DO</text>
<text x="1577" y="746" text-anchor="middle" font-size="12.5" fill="#4a4a4a" letter-spacing="1.5" style="stroke:#4a4a4a;stroke-width:0.55px">RETIROS DO</text>
<text x="1577" y="758" text-anchor="middle" font-size="12.5" fill="#fff" letter-spacing="1.5" style="stroke:#fff;stroke-width:3.4px;stroke-linejoin:round">PESCADOR</text>
<text x="1577" y="758" text-anchor="middle" font-size="12.5" fill="#4a4a4a" letter-spacing="1.5" style="stroke:#4a4a4a;stroke-width:0.55px">PESCADOR</text>
<text x="1826" y="760" text-anchor="middle" font-size="13" font-weight="400" fill="#333" letter-spacing="0" style="paint-order:stroke;stroke:#fff;stroke-width:3px;stroke-linejoin:round;" transform="rotate(10 1826 760)">Av. Progresso</text>
<text x="1196" y="198" text-anchor="middle" font-size="12" fill="#fff" letter-spacing="1.2" style="stroke:#fff;stroke-width:3.4px;stroke-linejoin:round">JARDIM</text>
<text x="1196" y="198" text-anchor="middle" font-size="12" fill="#4a4a4a" letter-spacing="1.2" style="stroke:#4a4a4a;stroke-width:0.55px">JARDIM</text>
<text x="1196" y="211" text-anchor="middle" font-size="12" fill="#fff" letter-spacing="1.2" style="stroke:#fff;stroke-width:3.4px;stroke-linejoin:round">CALIFORNIA</text>
<text x="1196" y="211" text-anchor="middle" font-size="12" fill="#4a4a4a" letter-spacing="1.2" style="stroke:#4a4a4a;stroke-width:0.55px">CALIFORNIA</text>
<text x="1787" y="208" text-anchor="middle" font-size="17" font-weight="400" fill="#1a73e8" letter-spacing="0" style="paint-order:stroke;stroke:#fff;stroke-width:3px;stroke-linejoin:round;">LUBEZ</text>
<text x="1767" y="225" text-anchor="middle" font-size="17" font-weight="400" fill="#1a73e8" letter-spacing="0" style="paint-order:stroke;stroke:#fff;stroke-width:3px;stroke-linejoin:round;">Distribuidor Autoriz</text>
<text x="1822" y="268" text-anchor="start" font-size="17" font-weight="400" fill="#556" letter-spacing="0" style="paint-order:stroke;stroke:#fff;stroke-width:3px;stroke-linejoin:round;">AG</text>
<text x="1897" y="268" text-anchor="middle" font-size="17" font-weight="400" fill="#556" letter-spacing="0" style="paint-order:stroke;stroke:#fff;stroke-width:3px;stroke-linejoin:round;">E</text>
<text x="1834" y="318" text-anchor="middle" font-size="12.5" fill="#fff" letter-spacing="1.5" style="stroke:#fff;stroke-width:3.4px;stroke-linejoin:round">JARDIM VENEZA</text>
<text x="1834" y="318" text-anchor="middle" font-size="12.5" fill="#4a4a4a" letter-spacing="1.5" style="stroke:#4a4a4a;stroke-width:0.55px">JARDIM VENEZA</text>
<text x="1726" y="382" text-anchor="middle" font-size="17" font-weight="400" fill="#556" letter-spacing="0" style="paint-order:stroke;stroke:#fff;stroke-width:3px;stroke-linejoin:round;">Jardins Nápoles</text>
<text x="1742" y="462" text-anchor="middle" font-size="12.5" fill="#fff" letter-spacing="1.5" style="stroke:#fff;stroke-width:3.4px;stroke-linejoin:round">RESIDENCIAL</text>
<text x="1742" y="462" text-anchor="middle" font-size="12.5" fill="#4a4a4a" letter-spacing="1.5" style="stroke:#4a4a4a;stroke-width:0.55px">RESIDENCIAL</text>
<text x="1742" y="475" text-anchor="middle" font-size="12.5" fill="#fff" letter-spacing="1.5" style="stroke:#fff;stroke-width:3.4px;stroke-linejoin:round">MARÍLIA</text>
<text x="1742" y="475" text-anchor="middle" font-size="12.5" fill="#4a4a4a" letter-spacing="1.5" style="stroke:#4a4a4a;stroke-width:0.55px">MARÍLIA</text>
<text x="452" y="250" text-anchor="start" font-size="17" font-weight="400" fill="#e8710a" letter-spacing="0" style="paint-order:stroke;stroke:#fff;stroke-width:3px;stroke-linejoin:round;">C</text>
<path d="M288 248 A15 15 0 1 1 318 248 C318 257 307 261 303 267 C299 261 288 257 288 248z" fill="#fff"/>
<circle cx="303" cy="248" r="13" fill="#1e9e6a"/>
<path d="M303 240 L298 247 h3 L297 252 h5 v4 h2 v-4 h5 L305 247 h3z" fill="#fff"/>
<path d="M130 369 A15 15 0 1 1 160 369 C160 378 149 382 145 388 C141 382 130 378 130 369z" fill="#fff"/>
<circle cx="145" cy="369" r="13" fill="#1e9e6a"/>
<path d="M145 361 L140 368 h3 L139 373 h5 v4 h2 v-4 h5 L147 368 h3z" fill="#fff"/>
<path d="M156 472 A14 14 0 1 1 184 472 C184 481 174 485 170 490 C166 485 156 481 156 472z" fill="#fff"/>
<circle cx="170" cy="472" r="12" fill="#1a97f5"/>
<path d="M164 470 h12 l1 9 h-14z" fill="#fff"/><path d="M167 470 a3 3.5 0 0 1 6 0" fill="none" stroke="#fff" stroke-width="1.5"/>
<path d="M274 764 A14 14 0 1 1 302 764 C302 773 292 777 288 782 C284 777 274 773 274 764z" fill="#fff"/>
<circle cx="288" cy="764" r="12" fill="#1a97f5"/>
<path d="M282 762 h12 l1 9 h-14z" fill="#fff"/><path d="M285 762 a3 3.5 0 0 1 6 0" fill="none" stroke="#fff" stroke-width="1.5"/>
<path d="M1088.5 757 A14.5 14.5 0 1 1 1117.5 757 C1117.5 766 1107 770 1103 775.5 C1099 770 1088.5 766 1088.5 757z" fill="#fff"/>
<circle cx="1103" cy="757" r="12.5" fill="#1a97f5"/>
<path d="M1097 755 h12 l1 9 h-14z" fill="#fff"/><path d="M1100 755 a3 3.5 0 0 1 6 0" fill="none" stroke="#fff" stroke-width="1.5"/>
<path d="M1881 207 A14 14 0 1 1 1909 207 C1909 216 1899 220 1895 225 C1891 220 1881 216 1881 207z" fill="#fff"/>
<circle cx="1895" cy="207" r="12" fill="#1a97f5"/>
<path d="M1889 205 h12 l1 9 h-14z" fill="#fff"/><path d="M1892 205 a3 3.5 0 0 1 6 0" fill="none" stroke="#fff" stroke-width="1.5"/>
<path d="M178 592 A14 14 0 1 1 206 592 C206 601 196 605 192 610 C188 605 178 601 178 592z" fill="#fff"/>
<circle cx="192" cy="592" r="12" fill="#6d8596"/>
<path d="M185 588 h14 l-7 -4z M186 597 h12 M187 589 v7 M192 589 v7 M197 589 v7" fill="#fff" stroke="#fff" stroke-width="1.3"/>
<path d="M564 831 A14 14 0 1 1 592 831 C592 840 582 844 578 849 C574 844 564 840 564 831z" fill="#fff"/>
<circle cx="578" cy="831" r="12" fill="#6d8596"/>
<path d="M570 829 l8 -4 l8 4 l-8 4z M573 831 v4 q5 3 10 0 v-4" fill="#fff"/>
<path d="M1223 830 A15 15 0 1 1 1253 830 C1253 839 1242 843 1238 849 C1234 843 1223 839 1223 830z" fill="#fff"/>
<circle cx="1238" cy="830" r="13" fill="#1e9e6a"/>
<circle cx="1238" cy="830" r="5" fill="#fff"/>
<path d="M1794 374 A14 14 0 1 1 1822 374 C1822 383 1812 387 1808 392 C1804 387 1794 383 1794 374z" fill="#fff"/>
<circle cx="1808" cy="374" r="12" fill="#7d8f9b"/>
<circle cx="1808" cy="374" r="4.5" fill="#fff"/>
<path d="M341 750 A14 14 0 1 1 369 750 C369 759 359 763 355 768 C351 763 341 759 341 750z" fill="#fff"/>
<circle cx="355" cy="750" r="12" fill="#5f7481"/>
<path d="M164 166 A15 15 0 1 1 194 166 C194 175 183 179 179 185 C175 179 164 175 164 166z" fill="#fff"/>
<circle cx="179" cy="166" r="13" fill="#a55cf0"/>
<path d="M173 163 h12 v8 h-12z M175 160 v3 M183 160 v3" fill="#fff" stroke="#fff" stroke-width="1.5"/>
<path d="M556 241 A14 14 0 1 1 584 241 C584 250 574 254 570 259 C566 254 556 250 556 241z" fill="#fff"/>
<circle cx="570" cy="241" r="12" fill="#f07a1a"/>
<path d="M940 851 L940 820 C940 810 948 805 951 805 C958 805 963 812 963 820 L963 851z" fill="#5e9784"/>
<rect x="233" y="178" width="27" height="16" rx="3" fill="#fff" stroke="#555" stroke-width="1.2"/>
<text x="246.5" y="190.3" text-anchor="middle" font-size="12" fill="#222">060</text>
<rect x="611" y="766" width="27" height="16" rx="3" fill="#fff" stroke="#555" stroke-width="1.2"/>
<text x="624.5" y="778.3" text-anchor="middle" font-size="12" fill="#222">153</text>
<rect x="1076" y="784" width="25" height="16" rx="3" fill="#fff" stroke="#555" stroke-width="1.2"/>
<text x="1088.5" y="796.3" text-anchor="middle" font-size="12" fill="#222">352</text>
<rect x="1730" y="341" width="46" height="16" rx="3" fill="#fff" stroke="#555" stroke-width="1.2"/>
<text x="1753.0" y="353.3" text-anchor="middle" font-size="12" fill="#222">GO-403</text>
<text x="125" y="842" font-size="21" font-weight="400" style="paint-order:stroke;stroke:#fff;stroke-width:2px"><tspan fill="#4285f4">G</tspan><tspan fill="#ea4335">o</tspan><tspan fill="#fbbc05">o</tspan><tspan fill="#4285f4">g</tspan><tspan fill="#34a853">l</tspan><tspan fill="#ea4335">e</tspan></text>
</g>
<!--/LABELS-->
</svg>
</div>
<!--MARKERS-->
<svg class="abs" style="left:930px;top:715px" width="200" height="140" viewBox="930 715 200 140">
<path d="M965 755 C961 745 953 740 953 730 A12 12 0 0 1 977 730 C977 740 969 745 965 755z" fill="#ee1414"/>
<text x="965" y="738" text-anchor="middle" font-family="Liberation Sans" font-size="16" fill="#fff">2</text>
<path d="M1037 776 C1033 766 1025 759 1025 748 A12 12 0 0 1 1049 748 C1049 759 1041 766 1037 776z" fill="#5e3f32"/>
<text x="1037.5" y="759" text-anchor="middle" font-family="Liberation Sans" font-size="16" fill="#fff">1</text>
</svg>
<!--/MARKERS-->
<div id="modal" class="abs"></div>
<!--REST-->
<div class="abs" style="left:113px;top:172px;width:45px;height:53px;background:#fff;border-radius:0 4px 4px 0"></div>
<svg class="abs" style="left:120px;top:182px" width="30" height="30" viewBox="120 182 30 30"><circle cx="133.4" cy="195" r="5.3" fill="none" stroke="#555" stroke-width="1.8"/><path d="M137.3 199 L143.4 205" stroke="#555" stroke-width="1.9" stroke-linecap="round"/></svg>
<div class="abs" style="left:113px;top:434px;width:21px;height:37px;background:#3453a8"></div>
<svg class="abs" style="left:113px;top:434px" width="21" height="37" viewBox="0 0 21 37"><path d="M8 13.5 L12.5 18.5 L8 23.5" fill="none" stroke="#fff" stroke-width="2.4" stroke-linecap="round" stroke-linejoin="round"/></svg>
<div class="abs" style="left:1842px;top:172px;width:50px;height:102px;background:#fff;border-radius:2px;box-shadow:0 1px 4px rgba(0,0,0,.3)"></div>
<div class="abs" style="left:1850px;top:222.5px;width:34px;height:1px;background:#e6e6e6"></div>
<svg class="abs" style="left:1842px;top:172px" width="50" height="102" viewBox="0 0 50 102"><path d="M14 25 H36 M25 14 V36" stroke="#666" stroke-width="4.2"/><path d="M14 76 H36" stroke="#666" stroke-width="4.2"/></svg>
<div class="abs" style="z-index:5;left:113px;top:672px;width:607px;height:85px;background:#fff;border-radius:0 8px 8px 8px;box-shadow:0 1px 3px rgba(0,0,0,.18)"></div>
<div class="abs" style="z-index:5;left:113px;top:699px;width:21px;height:37px;background:#3453a8"></div>
<svg class="abs" style="z-index:5;left:113px;top:699px" width="21" height="37" viewBox="0 0 21 37"><path d="M13 13.5 L8.5 18.5 L13 23.5" fill="none" stroke="#fff" stroke-width="2.4" stroke-linecap="round" stroke-linejoin="round"/></svg>
<div class="t" style="left:-137.50px;width:600px;text-align:center;top:721px;font-size:17px;font-weight:700;color:#6a8b3c;;z-index:6">0&nbsp;&nbsp;Kg</div>
<div class="abs" style="z-index:6;left:138px;top:743.5px;width:45px;height:1.2px;background:#e8e8e8"></div>
<div class="t" style="left:-69.30px;width:600px;text-align:center;top:721px;font-size:17px;font-weight:700;color:#6a8b3c;;z-index:6">0&nbsp;&nbsp;M<sup>3</sup></div>
<div class="abs" style="z-index:6;left:207px;top:743.5px;width:44px;height:1.2px;background:#e8e8e8"></div>
<div class="t" style="left:-4.60px;width:600px;text-align:center;top:721px;font-size:17px;font-weight:700;color:#6a8b3c;;z-index:6">0</div>
<div class="abs" style="z-index:6;left:276px;top:743.5px;width:35px;height:1.2px;background:#e8e8e8"></div>
<div class="t" style="left:54.70px;width:600px;text-align:center;top:721px;font-size:17px;font-weight:700;color:#6a8b3c;;z-index:6">0</div>
<div class="abs" style="z-index:6;left:335px;top:743.5px;width:35px;height:1.2px;background:#e8e8e8"></div>
<div class="t" style="left:114.00px;width:600px;text-align:center;top:721px;font-size:17px;font-weight:700;color:#6a8b3c;;z-index:6">0</div>
<div class="abs" style="z-index:6;left:395px;top:743.5px;width:35px;height:1.2px;background:#e8e8e8"></div>
<div class="t" style="left:189.40px;width:600px;text-align:center;top:721px;font-size:17.5px;font-weight:700;color:#6a8b3c;;z-index:6">R$ 0,00</div>
<div class="abs" style="z-index:6;left:454px;top:743.5px;width:67px;height:1.2px;background:#e8e8e8"></div>
<div class="t" style="left:280.20px;width:600px;text-align:center;top:721px;font-size:17.5px;font-weight:700;color:#6a8b3c;;z-index:6">R$ 0,00</div>
<div class="abs" style="z-index:6;left:545px;top:743.5px;width:67px;height:1.2px;background:#e8e8e8"></div>
<div class="t" style="left:368.00px;width:600px;text-align:center;top:721px;font-size:17.5px;font-weight:700;color:#6a8b3c;letter-spacing:0.6px;z-index:6">0.00%</div>
<div class="abs" style="z-index:6;left:637px;top:743.5px;width:59px;height:1.2px;background:#e8e8e8"></div>
<svg class="abs" style="z-index:6;left:130px;top:680px" width="580" height="40" viewBox="130 680 580 40">
<g fill="none" stroke="#7a7a7a" stroke-width="1.1">
 <path d="M153 694 L171 694 L177 711.5 L148 711.5 Z" fill="#fff"/>
 <circle cx="162.5" cy="688.5" r="3"/>
 <path d="M150 709.5 H175" stroke-dasharray="1 1"/>
 <text x="162.5" y="704.5" text-anchor="middle" font-family="Liberation Sans" font-size="9" fill="#7a7a7a" stroke="none">Kg</text>
</g>
<g stroke="#333" stroke-width="1" stroke-linejoin="round">
 <path d="M223 687 L230 685 L237 687 L237 696 L230 698 L223 696z" fill="#fff"/>
 <path d="M230 698 L237 696 V687 L230 689z" fill="#666"/>
 <path d="M215 701 L222 699 L230 701 L230 710 L222 712 L215 710z" fill="#fff"/>
 <path d="M222 703 L230 701 V710 L222 712z" fill="#666"/>
 <path d="M230 701 L238 699 L245 701 L245 710 L238 712 L230 710z" fill="#fff"/>
 <path d="M238 703 L245 701 V710 L238 712z" fill="#666"/>
</g>
<g fill="none" stroke="#7a7a7a" stroke-width="1.1">
 <rect x="282.5" y="687.5" width="26" height="24" rx="2"/>
 <path d="M282.5 693 H308.5 M293 687.5 V696 L295.5 695 L298 696 V687.5 M285 709 H306" />
 <path d="M287 700 h4 l-2 4 v3 M296 701 a2.5 2 0 1 1 5 0 a2.5 2 0 1 1 -5 0 M298.5 703 v4" />
</g>
<g fill="none" stroke="#a8a8a8" stroke-width="1.1">
 <path d="M342.5 688.5 H358 V707 H342.5z M358 694 H363 L367 700 V707 H358" />
 <circle cx="347" cy="708" r="2"/><circle cx="362" cy="708" r="2"/>
 <path d="M344 692 H356 M344 696 H356"/>
</g>
<g fill="none" stroke="#7a7a7a" stroke-width="1.1">
 <path d="M407 686 h13 l3 -2 v14 h-16z M398.5 699 h16 v14 h-16z M414.5 699 h15 v14 h-15z M398.5 699 l3 -3 M429.5 699 l-3 -3"/>
 <path d="M402 709 h4 M418 709 h4 M409 704 v3"/>
</g>
<g fill="none" stroke="#7a7a7a" stroke-width="1.1">
 <rect x="476" y="689" width="27" height="16"/>
 <circle cx="489.5" cy="697" r="3.6"/><circle cx="481" cy="697" r="1.1"/><circle cx="498" cy="697" r="1.1"/>
 <path d="M476 707 h27 M476 709 q14 0 26 3"/>
</g>
<g fill="none" stroke="#7a7a7a" stroke-width="1.2">
 <path d="M570 691 a12.5 12.5 0 1 0 18 -1.5" />
 <circle cx="580.2" cy="700.2" r="9.3"/>
 <text x="580.2" y="705" text-anchor="middle" font-family="Liberation Sans" font-size="13" fill="#7a7a7a" stroke="none">$</text>
 <path d="M658 691 a12.5 12.5 0 1 0 18 -1.5" />
 <circle cx="668" cy="700.2" r="9.3"/>
 <text x="668" y="705" text-anchor="middle" font-family="Liberation Sans" font-size="13" fill="#7a7a7a" stroke="none">$</text>
</g>
</svg>
<svg class="abs" style="left:1020px;top:719px" width="36" height="18" viewBox="1020 719 36 18"><path d="M1022 719 L1053 719 L1037.5 735z" fill="#fff"/></svg>
<div class="abs" style="left:949px;top:815px;width:119px;height:30px;background:#fff;border-radius:2px;box-shadow:0 1px 3px rgba(0,0,0,.25)"></div>
<div class="abs" style="left:1091px;top:815px;width:27px;height:30px;background:rgba(255,255,255,.85);border-radius:2px"></div>
<svg class="abs" style="left:949px;top:815px" width="170" height="30" viewBox="949 815 170 30">
<path d="M978.5 818 V842 M1008.5 818 V842 M1038.5 818 V842" stroke="#eee" stroke-width="1"/>
<path d="M957 832 l3 4 q2 3 5 3 h3 q4 0 4 -4 v-8 q0 -1.5 -1.5 -1.5 q-1.5 0 -1.5 1.5 v-2 q0 -1.5 -1.5 -1.5 q-1.5 0 -1.5 1.5 v-1 q0 -1.5 -1.5 -1.5 q-1.5 0 -1.5 1.5 v1 q0 -1.5 -1.5 -1.5 q-1.5 0 -1.5 1.5 v7 l-1.5 -1.5 q-1.5 -1 -2 0.5z" fill="#fff" stroke="#111" stroke-width="1.2"/>
<path d="M986 823 L1001 829 L1002 832 L995 837 L989 834z" fill="#bdbdbd" stroke="#999" stroke-width="1"/>
<circle cx="1023.5" cy="830" r="7" fill="#bdbdbd" stroke="#999" stroke-width="1"/>
<rect x="1046.5" y="822.5" width="14" height="14" fill="#bdbdbd" stroke="#999" stroke-width="1"/>
<path d="M1094 836 L1114 826 L1116 830 L1096 840z" fill="#6f6f6f"/>
<path d="M1098 834 l1 2 M1102 832 l1 2 M1106 830 l1 2 M1110 828 l1 2" stroke="#ddd" stroke-width="0.8"/>
</svg>
<div class="abs" style="left:1420px;top:834px;width:485px;height:17px;background:rgba(245,245,245,.75)"></div>
<div class="t" style="left:1427.30px;top:837px;font-size:12.6px;font-weight:400;color:#222;">Atalhos do teclado</div>
<div class="t" style="left:1545.80px;top:837px;font-size:12.6px;font-weight:400;color:#222;">Dados cartográficos ©2024</div>
<div class="t" style="left:1714.90px;top:837px;font-size:12.6px;font-weight:400;color:#222;">Termos</div>
<div class="t" style="left:1771.50px;top:837px;font-size:12.6px;font-weight:400;color:#222;">Informar erro no mapa</div>
<div class="abs" style="left:1538.9px;top:835px;width:1px;height:15px;background:#e0e0e0"></div>
<div class="abs" style="left:1707.3px;top:835px;width:1px;height:15px;background:#e0e0e0"></div>
<div class="abs" style="left:1764.6px;top:835px;width:1px;height:15px;background:#e0e0e0"></div>
<div class="abs" style="left:1843.5px;top:628px;width:50px;height:50px;border-radius:50%;background:#3454a7;box-shadow:0 3px 6px rgba(0,0,0,.28)"></div>
<div class="abs" style="left:1843.5px;top:698px;width:50px;height:50px;border-radius:50%;background:#3454a7;box-shadow:0 3px 6px rgba(0,0,0,.28)"></div>
<div class="abs" style="left:1843.5px;top:766.5px;width:50px;height:50px;border-radius:50%;background:#3454a7;box-shadow:0 3px 6px rgba(0,0,0,.28)"></div>
<div class="abs" style="left:1834px;top:829px;width:70px;height:70px;border-radius:50%;background:#3454a7;box-shadow:0 3px 8px rgba(0,0,0,.3)"></div>
<svg class="abs" style="left:1840px;top:620px" width="79" height="290" viewBox="1840 620 79 290">
<path d="M1858.5 645 h20 v16 h-20z" fill="none" stroke="#fff" stroke-width="2" stroke-dasharray="2 1.5"/>
<rect x="1869" y="644" width="10.5" height="7" fill="#fff"/>
<circle cx="1860" cy="717.5" r="1.6" fill="#fff"/><circle cx="1860" cy="723" r="1.6" fill="#fff"/><circle cx="1860" cy="728.5" r="1.6" fill="#fff"/>
<path d="M1864 717.5 h15 M1864 723 h15 M1864 728.5 h15" stroke="#fff" stroke-width="2.6" stroke-linecap="round"/>
<path d="M1858.5 786 h20 M1862.5 792 h12 M1866.5 798 h4" stroke="#fff" stroke-width="2.6"/>
<path d="M1861 860 L1869 868 L1877 860" fill="none" stroke="#fff" stroke-width="3"/>
<circle cx="1893.5" cy="697.5" r="14" fill="#f03d7a"/>
<text x="1893.5" y="703.5" text-anchor="middle" font-family="Liberation Sans" font-weight="700" font-size="16" fill="#fff">1</text>
</svg>
<svg class="abs" style="left:710px;top:862px" width="100" height="40" viewBox="710 862 100 40"><path d="M716.7 896 V868.3 H725 L737.2 884 L749.4 868.3 H757.7 V896 H750.5 V879.5 L737.2 895 L723.9 879.5 V896z" fill="#222"/><rect x="764.3" y="868.3" width="5" height="15.7" fill="#1fcf4f"/><rect x="777.3" y="868.3" width="5.4" height="15.7" fill="#4a58e8"/><rect x="797.7" y="868.3" width="5.6" height="15.7" fill="#ea2d8b"/></svg>
<div class="t" style="left:813.00px;top:874px;font-size:15.35px;font-weight:400;color:#a3a3a3;">Copyright © 2008-2024. Máxima Sistemas. Todos os direitos reservados.</div>
<!--/REST-->
<!--MODAL-->
<svg class="abs" style="left:1578px;top:255px" width="22" height="22" viewBox="0 0 22 22"><path d="M3 3 L19 19 M19 3 L3 19" stroke="#555" stroke-width="2.1" stroke-linecap="round"/></svg>
<div class="t" style="left:871.30px;top:306px;font-size:19.85px;font-weight:400;color:#2a2d30;">DJAIR ALBERTO DO NASCIMENTO</div>
<div class="abs" style="left:472px;top:340px;width:1125px;height:1px;background:#6a8b3c"></div>
<div class="abs" style="left:497px;top:353px;width:202px;height:45px;border-radius:5px;background:#6a8b3c"></div>
<div class="t" style="left:538.75px;top:367px;font-size:17.06px;font-weight:700;color:#fff;">Email Secundário</div>
<svg class="abs" style="left:517px;top:370px" width="18" height="13" viewBox="0 0 18 13"><rect x="1.5" y="1.5" width="14.5" height="10" fill="none" stroke="#fff" stroke-width="1.6"/><path d="M1.5 2 L8.75 7.5 L16 2" fill="none" stroke="#fff" stroke-width="1.5"/></svg>
<div class="abs" style="left:749px;top:353px;width:111px;height:45px;border-radius:5px;background:#3f5eab"></div>
<div class="t" style="left:791.70px;top:367px;font-size:17.5px;font-weight:700;color:#fff;">Editar</div>
<svg class="abs" style="left:770px;top:368px" width="17" height="16" viewBox="0 0 17 16"><path d="M8 3 H1.5 V14.5 H12.5 V8.5" fill="none" stroke="#fff" stroke-width="1.6"/><path d="M6 11 L6.5 8.5 L13.5 1.5 L15.5 3.5 L8.5 10.5z" fill="none" stroke="#fff" stroke-width="1.5" stroke-linejoin="round"/></svg>
<div class="abs" style="left:910px;top:353px;width:140px;height:45px;border-radius:5px;background:#f20a1e"></div>
<div class="t" style="left:951.30px;top:367px;font-size:17.4px;font-weight:700;color:#fff;">Transferir</div>
<svg class="abs" style="left:932px;top:367px" width="14" height="17" viewBox="0 0 14 17"><path d="M7 14 V2.5 M2.5 7 L7 2.5 L11.5 7" fill="none" stroke="#fff" stroke-width="1.6"/><path d="M1.5 15.5 H12.5" stroke="#fff" stroke-width="1.4"/></svg>
<div class="abs" style="left:1100px;top:353px;width:178px;height:45px;border-radius:5px;background:#e6b90b"></div>
<div class="t" style="left:1140.80px;top:367px;font-size:17.9px;font-weight:700;color:#fff;">Agendamento</div>
<svg class="abs" style="left:1121px;top:367px" width="17" height="17" viewBox="0 0 17 17"><circle cx="8.5" cy="9" r="6.4" fill="none" stroke="#fff" stroke-width="1.7"/><path d="M8.5 5.2 V9.3 H11.6" fill="none" stroke="#fff" stroke-width="1.6"/></svg>
<div class="abs" style="left:1328px;top:353px;width:244px;height:45px;border-radius:5px;background:#bf382b"></div>
<div class="t" style="left:1370.30px;top:367px;font-size:17.4px;font-weight:700;color:#fff;">Remover da Pré-carga</div>
<svg class="abs" style="left:1351px;top:367px" width="15" height="17" viewBox="0 0 15 17"><path d="M2.5 5 H12.5 V15.5 H2.5z" fill="none" stroke="#fff" stroke-width="1.6"/><path d="M1.5 4 H13.5 M5.5 3.5 V2 H9.5 V3.5 M5.3 7 V13.5 M7.5 7 V13.5 M9.7 7 V13.5" fill="none" stroke="#fff" stroke-width="1.2"/></svg>
<div class="abs" style="left:1313px;top:329px;width:274px;height:90px;border:3.3px solid #ff0000;border-radius:2px"></div>
<svg class="abs" style="left:1070px;top:240px" width="240" height="100" viewBox="1070 240 240 100"><path d="M1082 251 L1280 325" stroke="#f41010" stroke-width="3.3" stroke-linecap="round"/><path d="M1297.5 331.8 L1273 331.5 L1279.5 316.5z" fill="#f41010"/></svg>
<div class="t" style="left:483.40px;top:430px;font-size:14px;font-weight:700;color:#6a8b3c;">Código:</div>
<div class="t" style="left:547.90px;top:430px;font-size:14px;font-weight:700;color:#222;letter-spacing:0.95px">9999997180</div>
<div class="t" style="left:483.40px;top:458px;font-size:14px;font-weight:700;color:#6a8b3c;">Fantasia:</div>
<div class="t" style="left:557.40px;top:458px;font-size:14px;font-weight:700;color:#222;letter-spacing:-0.1px">DJAIR ALBERTO DO</div>
<div class="t" style="left:557.40px;top:477px;font-size:14px;font-weight:700;color:#222;letter-spacing:-0.1px">NASCIMENTO</div>
<div class="t" style="left:483.40px;top:505px;font-size:14px;font-weight:700;color:#6a8b3c;">CNPJ:</div>
<div class="t" style="left:536.90px;top:505px;font-size:14px;font-weight:700;color:#222;letter-spacing:1.0px">04481822465</div>
<div class="t" style="left:483.40px;top:535px;font-size:14px;font-weight:700;color:#6a8b3c;">Telefone:</div>
<div class="t" style="left:558.60px;top:535px;font-size:14px;font-weight:700;color:#222;letter-spacing:0.95px">993534169</div>
<div class="t" style="left:483.40px;top:564px;font-size:14px;font-weight:700;color:#6a8b3c;">Município:</div>
<div class="t" style="left:566.00px;top:564px;font-size:14px;font-weight:700;color:#222;letter-spacing:0.15px">MORENO - PE</div>
<div class="t" style="left:483.40px;top:593px;font-size:14px;font-weight:700;color:#6a8b3c;">CEP:</div>
<div class="t" style="left:527.90px;top:593px;font-size:14px;font-weight:700;color:#222;letter-spacing:1.05px">54800000</div>
<div class="t" style="left:483.40px;top:622px;font-size:14px;font-weight:700;color:#6a8b3c;">Rota:</div>
<div class="t" style="left:530.80px;top:622px;font-size:14px;font-weight:700;color:#222;letter-spacing:0.15px">5 - CAMPINA GRANDE</div>
<div class="t" style="left:483.40px;top:650px;font-size:14px;font-weight:700;color:#6a8b3c;">Obs Rota:</div>
<div class="abs" style="left:478px;top:451.1px;width:240px;height:1.3px;background:#cfcfcf"></div>
<div class="abs" style="left:478px;top:498.1px;width:240px;height:1.3px;background:#cfcfcf"></div>
<div class="abs" style="left:478px;top:526.9px;width:240px;height:1.3px;background:#cfcfcf"></div>
<div class="abs" style="left:478px;top:555.9px;width:240px;height:1.3px;background:#cfcfcf"></div>
<div class="abs" style="left:478px;top:584.9px;width:240px;height:1.3px;background:#cfcfcf"></div>
<div class="abs" style="left:478px;top:613.9px;width:240px;height:1.3px;background:#cfcfcf"></div>
<div class="abs" style="left:478px;top:642.8px;width:240px;height:1.3px;background:#cfcfcf"></div>
<div class="abs" style="left:735px;top:423px;width:1.3px;height:282px;background:#d6d6d6"></div>
<div class="abs" style="left:748px;top:446px;width:843px;height:102px;border:1.3px solid #dde1ea"></div>
<div class="abs" style="left:760px;top:440px;width:80px;height:14px;background:#fff"></div>
<div class="t" style="left:765.70px;top:440px;font-size:16px;font-weight:700;color:#222;">Pedidos:</div>
<div class="abs" style="left:756.5px;top:473px;width:825px;height:66px;border-radius:6px;background:#fff;box-shadow:0 1.5px 2px rgba(0,0,0,.28),0 0 1px rgba(0,0,0,.08);overflow:hidden"><div class="abs" style="left:0;top:33.5px;width:825px;height:33px;background:#f7f7f7;border-top:1px solid #e6e6e6"></div></div>
<div class="t" style="left:765.50px;top:483px;font-size:16px;font-weight:700;color:#222;">N°Ped</div>
<div class="t" style="left:889.70px;top:483px;font-size:16px;font-weight:700;color:#222;">Data</div>
<div class="t" style="left:985.00px;top:483px;font-size:16px;font-weight:700;color:#222;">N°NF</div>
<div class="t" style="left:1041.40px;top:482px;font-size:16.4px;font-weight:700;color:#222;">Reentrega</div>
<div class="t" style="left:1137.80px;top:482px;font-size:16.5px;font-weight:700;color:#222;">Agendamento</div>
<div class="t" style="left:1263.80px;top:483px;font-size:16px;font-weight:700;color:#222;">Valor</div>
<div class="t" style="left:1357.20px;top:483px;font-size:16px;font-weight:700;color:#222;">Peso</div>
<div class="t" style="left:1429.20px;top:483px;font-size:16px;font-weight:700;color:#222;">Volume</div>
<div class="t" style="left:1514.20px;top:483px;font-size:15.5px;font-weight:700;color:#222;">Ações</div>
<div class="t" style="left:791.20px;top:514px;font-size:15px;font-weight:400;color:#333;">9999979864</div>
<div class="t" style="left:889.70px;top:514px;font-size:15.5px;font-weight:400;color:#333;">03/12/2024</div>
<div class="t" style="left:985.00px;top:514px;font-size:15px;font-weight:400;color:#333;">6891</div>
<div class="t" style="left:1041.40px;top:514px;font-size:15px;font-weight:400;color:#333;">Não</div>
<div class="t" style="left:1137.80px;top:514px;font-size:15px;font-weight:400;color:#333;">Não</div>
<div class="t" style="left:1263.80px;top:515px;font-size:14.4px;font-weight:400;color:#333;">R$ 2.572,50</div>
<div class="t" style="left:1357.20px;top:515px;font-size:14.5px;font-weight:400;color:#333;">374.5 kg</div>
<div class="t" style="left:1429.20px;top:514px;font-size:15px;font-weight:400;color:#333;">0.00 m<sup>3</sup></div>
<svg class="abs" style="left:764px;top:512px" width="24" height="18" viewBox="0 0 24 18"><path d="M1 2.5 L6 1 L12 3.5 L18 1 L23 2.5 L22 6 L12 8.5 L2 6z" fill="#6b4536"/><path d="M3.5 7.2 L12 9.5 L20.5 7.2 V15 L12 17.3 L3.5 15z" fill="#6b4536"/><path d="M7 5.8 L10 3.2 L12 5.5 L14 3.2 L17 5.8" fill="none" stroke="#f7f7f7" stroke-width="1"/></svg>
<svg class="abs" style="left:1506px;top:511px" width="27" height="19" viewBox="0 0 27 19"><path d="M1.5 9.5 C6 1.5 21 1.5 25.5 9.5 C21 17.5 6 17.5 1.5 9.5z" fill="#3a55a8"/><circle cx="13.5" cy="9.5" r="4.2" fill="none" stroke="#fff" stroke-width="1.6"/></svg>
<svg class="abs" style="left:1544px;top:510px" width="24" height="22" viewBox="0 0 24 22"><path d="M1 1 H22.5 V15 H5 L1 20.8z" fill="#b39ddb"/><path d="M5 5 H18.5 M5 8 H18.5 M5 11 H13" stroke="#fff" stroke-width="1.2"/></svg>
<div class="abs" style="left:748px;top:558px;width:843px;height:65.5px;border:1.3px solid #dde1ea"></div>
<div class="abs" style="left:770px;top:552px;width:122px;height:14px;background:#fff"></div>
<div class="t" style="left:776.20px;top:551px;font-size:16.4px;font-weight:700;color:#222;">Totalizadores:</div>
<div class="t" style="left:556.00px;width:600px;text-align:center;top:583px;font-size:13.9px;font-weight:700;color:#6a8b3c;">Pedidos</div>
<div class="t" style="left:556.00px;width:600px;text-align:center;top:602px;font-size:14.8px;font-weight:700;color:#111;">1</div>
<div class="t" style="left:764.80px;width:600px;text-align:center;top:582px;font-size:14.9px;font-weight:700;color:#6a8b3c;">Valor Total</div>
<div class="t" style="left:764.80px;width:600px;text-align:center;top:602px;font-size:14.8px;font-weight:700;color:#111;">R$ 2.572,50</div>
<div class="t" style="left:973.70px;width:600px;text-align:center;top:582px;font-size:14.9px;font-weight:700;color:#6a8b3c;">Peso Total</div>
<div class="t" style="left:973.70px;width:600px;text-align:center;top:601px;font-size:15.2px;font-weight:700;color:#111;">374.50 kg</div>
<div class="t" style="left:1182.60px;width:600px;text-align:center;top:582px;font-size:14.8px;font-weight:700;color:#6a8b3c;">Volume Total</div>
<div class="t" style="left:1182.60px;width:600px;text-align:center;top:601px;font-size:15px;font-weight:700;color:#111;">0.00 m<sup>3</sup></div>
<div class="abs" style="left:1604px;top:303px;width:8px;height:347px;border-radius:4px;background:#dcdcdc"></div>
<!--/MODAL-->
<div id="footer" class="abs"></div>
<div id="botbar" class="abs"></div>
</body></html>
